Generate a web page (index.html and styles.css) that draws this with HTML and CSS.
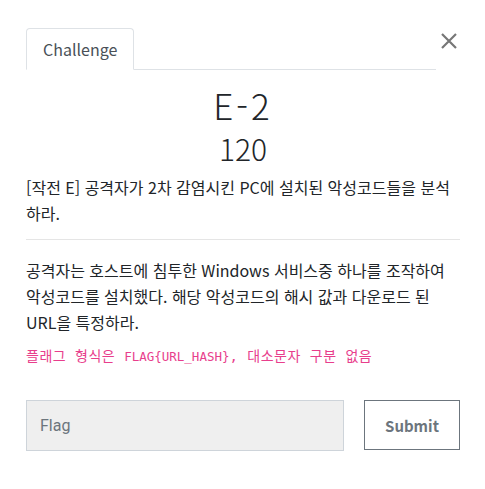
FILE: index.html
```html
<!DOCTYPE html>
<html lang="ko">
<head>
    <meta charset="UTF-8">
    <meta name="viewport" content="width=device-width, initial-scale=1.0">
    <title>Challenge</title>
    <link rel="stylesheet" href="styles.css">
</head>
<body>
    <div class="modal">
        <div class="tabs-row">
            <ul class="tabs">
                <li class="tab active">Challenge</li>
            </ul>
            <button class="close" aria-label="Close">
                <svg width="18" height="18" viewBox="0 0 18 18"><path d="M2 2L16 16M16 2L2 16" stroke="#777" stroke-width="2.2" fill="none"/></svg>
            </button>
        </div>

        <h2 class="title">E-2</h2>
        <h3 class="value">120</h3>

        <p class="desc">[작전 E] 공격자가 2차 감염시킨 PC에 설치된 악성코드들을 분석하라.</p>
        <hr>
        <p class="desc">공격자는 호스트에 침투한 Windows 서비스중 하나를 조작하여 악성코드를 설치했다. 해당 악성코드의 해시 값과 다운로드 된 URL을 특정하라.</p>
        <p class="hint">플래그 형식은 <code>FLAG{URL_HASH}</code>, 대소문자 구분 없음</p>

        <form class="submit-row" onsubmit="return false">
            <input type="text" class="flag-input" placeholder="Flag">
            <button type="submit" class="submit-btn">Submit</button>
        </form>
    </div>
</body>
</html>
```

FILE: styles.css
```css
body { margin: 0; background: #fff; font-family: "Noto Sans CJK KR", "Noto Sans", sans-serif; color: #212529; }
.modal { width: 434px; padding: 28px 0 0 26px; }
.tabs-row { display: flex; align-items: flex-start; }
.tabs { list-style: none; margin: 0; padding: 0; width: 410px; height: 41px; border-bottom: 1px solid #dee2e6; display: flex; }
.tab { box-sizing: border-box; padding: 0 16px; line-height: 40px; font-size: 16px; color: #495057; border: 1px solid #dee2e6; border-bottom-color: #fff; border-radius: 4px 4px 0 0; background: #fff; height: 42px; }
.close { margin-left: 2px; padding: 0; border: none; background: none; width: 22px; height: 26px; display: flex; align-items: center; justify-content: center; cursor: pointer; }
.title { margin: 12px 0 0; text-align: center; font-size: 35px; font-weight: 300; line-height: 46px; letter-spacing: 3px; }
.value { margin: 0; text-align: center; font-size: 30px; font-weight: 300; line-height: 40px; }
.desc { margin: 6px 0 0; font-size: 16px; line-height: 26px; }
hr { border: none; border-top: 1px solid #e5e5e5; margin: 13px 0 17px; }
.hint { margin: 10px 0 0; font-size: 14px; letter-spacing: 0.5px; color: #e83e8c; font-family: "DejaVu Sans Mono", "Noto Sans CJK KR", monospace; }
.hint code { font-family: "DejaVu Sans Mono", monospace; font-size: 12.5px; letter-spacing: 0; }
.submit-row { display: flex; gap: 20px; margin-top: 35px; }
.flag-input { width: 318px; height: 51px; box-sizing: border-box; background: #efefef; border: 1px solid #ced4da; padding: 0 13px; font-size: 16px; font-family: "Roboto", sans-serif; color: #495057; }
.flag-input::placeholder { color: #6c757d; }
.submit-btn { width: 96px; height: 50px; box-sizing: border-box; background: #fff; border: 1px solid #6c757d; font-family: "Noto Sans CJK KR", sans-serif; font-weight: 700; font-size: 15px; color: #6c757d; cursor: pointer; }
```
